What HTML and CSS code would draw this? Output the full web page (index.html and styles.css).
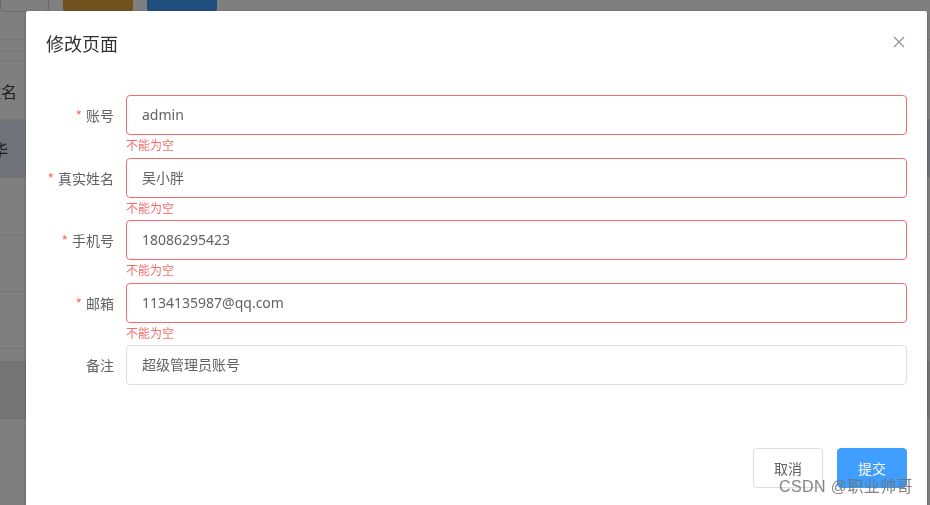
FILE: index.html
```html
<!DOCTYPE html>
<html lang="zh-CN">
<head>
<meta charset="utf-8">
<title>修改页面</title>
<link rel="stylesheet" href="styles.css">
</head>
<body>
<div class="page">
  <div class="toolbar">
    <span class="tb-btn tb-plain"></span>
    <span class="tb-btn tb-warning"></span>
    <span class="tb-btn tb-primary"></span>
  </div>
  <div class="strip"></div>
  <div class="strip"></div>
  <div class="row head"><span class="cell cell-head">姓名</span></div>
  <div class="row hover"><span class="cell cell-body">华</span></div>
  <div class="row"></div>
  <div class="row"></div>
  <div class="row"></div>
  <div class="spacer"></div>
  <div class="footer-band"></div>
</div>
<div class="mask"></div>

<div class="dialog">
  <div class="dialog-header">
    <span class="dialog-title">修改页面</span>
    <span class="dialog-close">
      <svg width="12" height="12" viewBox="0 0 12 12"><path d="M1 1L11 11M11 1L1 11" stroke="#909399" stroke-width="1.2" fill="none"/></svg>
    </span>
  </div>
  <div class="dialog-body">
    <div class="form-item">
      <label class="form-label"><span class="req">*</span>账号</label>
      <div class="form-content">
        <div class="input error">admin</div>
        <div class="form-error">不能为空</div>
      </div>
    </div>
    <div class="form-item">
      <label class="form-label"><span class="req">*</span>真实姓名</label>
      <div class="form-content">
        <div class="input error">吴小胖</div>
        <div class="form-error">不能为空</div>
      </div>
    </div>
    <div class="form-item">
      <label class="form-label"><span class="req">*</span>手机号</label>
      <div class="form-content">
        <div class="input error">18086295423</div>
        <div class="form-error">不能为空</div>
      </div>
    </div>
    <div class="form-item">
      <label class="form-label"><span class="req">*</span>邮箱</label>
      <div class="form-content">
        <div class="input error">1134135987@qq.com</div>
        <div class="form-error">不能为空</div>
      </div>
    </div>
    <div class="form-item">
      <label class="form-label">备注</label>
      <div class="form-content">
        <div class="input">超级管理员账号</div>
      </div>
    </div>
  </div>
  <div class="dialog-footer">
    <button class="btn">取消</button>
    <button class="btn btn-primary">提交</button>
  </div>
</div>

<div class="watermark">CSDN @职业帅哥</div>
</body>
</html>
```

FILE: styles.css
```css
* { box-sizing: border-box; }
html, body {
  margin: 0;
  padding: 0;
  width: 930px;
  height: 505px;
  overflow: hidden;
  background: #fff;
  font-family: "Noto Sans", "Noto Sans CJK SC", sans-serif;
}

/* background page */
.page {
  display: flex;
  flex-direction: column;
  width: 930px;
}
.toolbar {
  display: flex;
  gap: 14px;
  height: 40px;
  border-bottom: 1px solid #ebeef5;
  padding-left: 0;
}
.tb-btn {
  display: block;
  width: 70px;
  height: 12px;
  border-radius: 0 0 4px 4px;
}
.tb-plain {
  width: 49px;
  margin-left: 0;
  background: #fff;
  border: 1px solid #d3d6dc;
  border-top: none;
}
.tb-warning { background: #e6a23c; }
.tb-primary { background: #409eff; }
.strip {
  height: 11px;
  border-bottom: 1px solid #ebeef5;
}
.row {
  height: 57px;
  border-bottom: 1px solid #ebeef5;
  display: flex;
  align-items: center;
  color: #303133;
  font-size: 16px;
}
.head { height: 58px; }
.hover { background: #dfe7f2; height: 58px; }
.cell {
  white-space: nowrap;
  display: flex;
  justify-content: flex-end;
}
.cell-head { width: 17px; color: #3a3a3a; }
.cell-body { width: 8px; color: #3a3a3a; }
.spacer { height: 12px; }
.footer-band { height: 58px; background: #e9e9e9; }

.mask {
  position: fixed;
  inset: 0;
  background: rgba(0, 0, 0, 0.5);
}

/* dialog */
.dialog {
  position: fixed;
  left: 26px;
  top: 11px;
  width: 901px;
  background: #fff;
  border-radius: 2px;
  box-shadow: 0 1px 3px rgba(0,0,0,.3);
}
.dialog-header {
  position: relative;
  padding: 20px 20px 10px;
}
.dialog-title {
  display: block;
  font-family: "Noto Sans CJK SC", sans-serif;
  font-size: 18px;
  line-height: 24px;
  color: #303133;
}
.dialog-close {
  position: absolute;
  top: 25px;
  right: 22px;
  width: 12px;
  height: 12px;
  display: flex;
}
.dialog-body {
  padding: 30px 20px;
}
.form-item {
  display: flex;
  margin-bottom: 22.5px;
}
.form-item:last-child { margin-bottom: 22.5px; }
.form-label {
  width: 80px;
  flex: none;
  text-align: right;
  padding-right: 12px;
  line-height: 40px;
  font-size: 14px;
  color: #606266;
  font-family: "Noto Sans CJK SC", sans-serif;
}
.req {
  color: #f56c6c;
  margin-right: 4px;
}
.form-content {
  flex: 1;
  position: relative;
}
.input {
  height: 40px;
  line-height: 38px;
  border: 1px solid #dcdfe6;
  border-radius: 4px;
  padding: 0 15px;
  font-size: 14px;
  color: #606266;
}
.input.error { border-color: #f56c6c; }
.form-error {
  position: absolute;
  top: 100%;
  left: 0;
  padding-top: 4px;
  font-size: 12px;
  line-height: 1;
  color: #f56c6c;
  font-family: "Noto Sans CJK SC", sans-serif;
}
.dialog-footer {
  padding: 10px 20px 20px;
  display: flex;
  justify-content: flex-end;
  gap: 14px;
}
.btn {
  height: 40px;
  width: 70px;
  padding: 0;
  border: 1px solid #dcdfe6;
  border-radius: 4px;
  background: #fff;
  color: #606266;
  font-size: 14px;
  font-family: "Noto Sans CJK SC", sans-serif;
}
.btn-primary {
  background: #409eff;
  border-color: #409eff;
  color: #fff;
}

.watermark {
  position: fixed;
  left: 779px;
  top: 476px;
  font-size: 16px;
  line-height: 22px;
  letter-spacing: 0.4px;
  color: rgba(110, 110, 110, 0.85);
  white-space: nowrap;
  font-family: "Liberation Sans", "Noto Sans CJK SC", sans-serif;
}
```
